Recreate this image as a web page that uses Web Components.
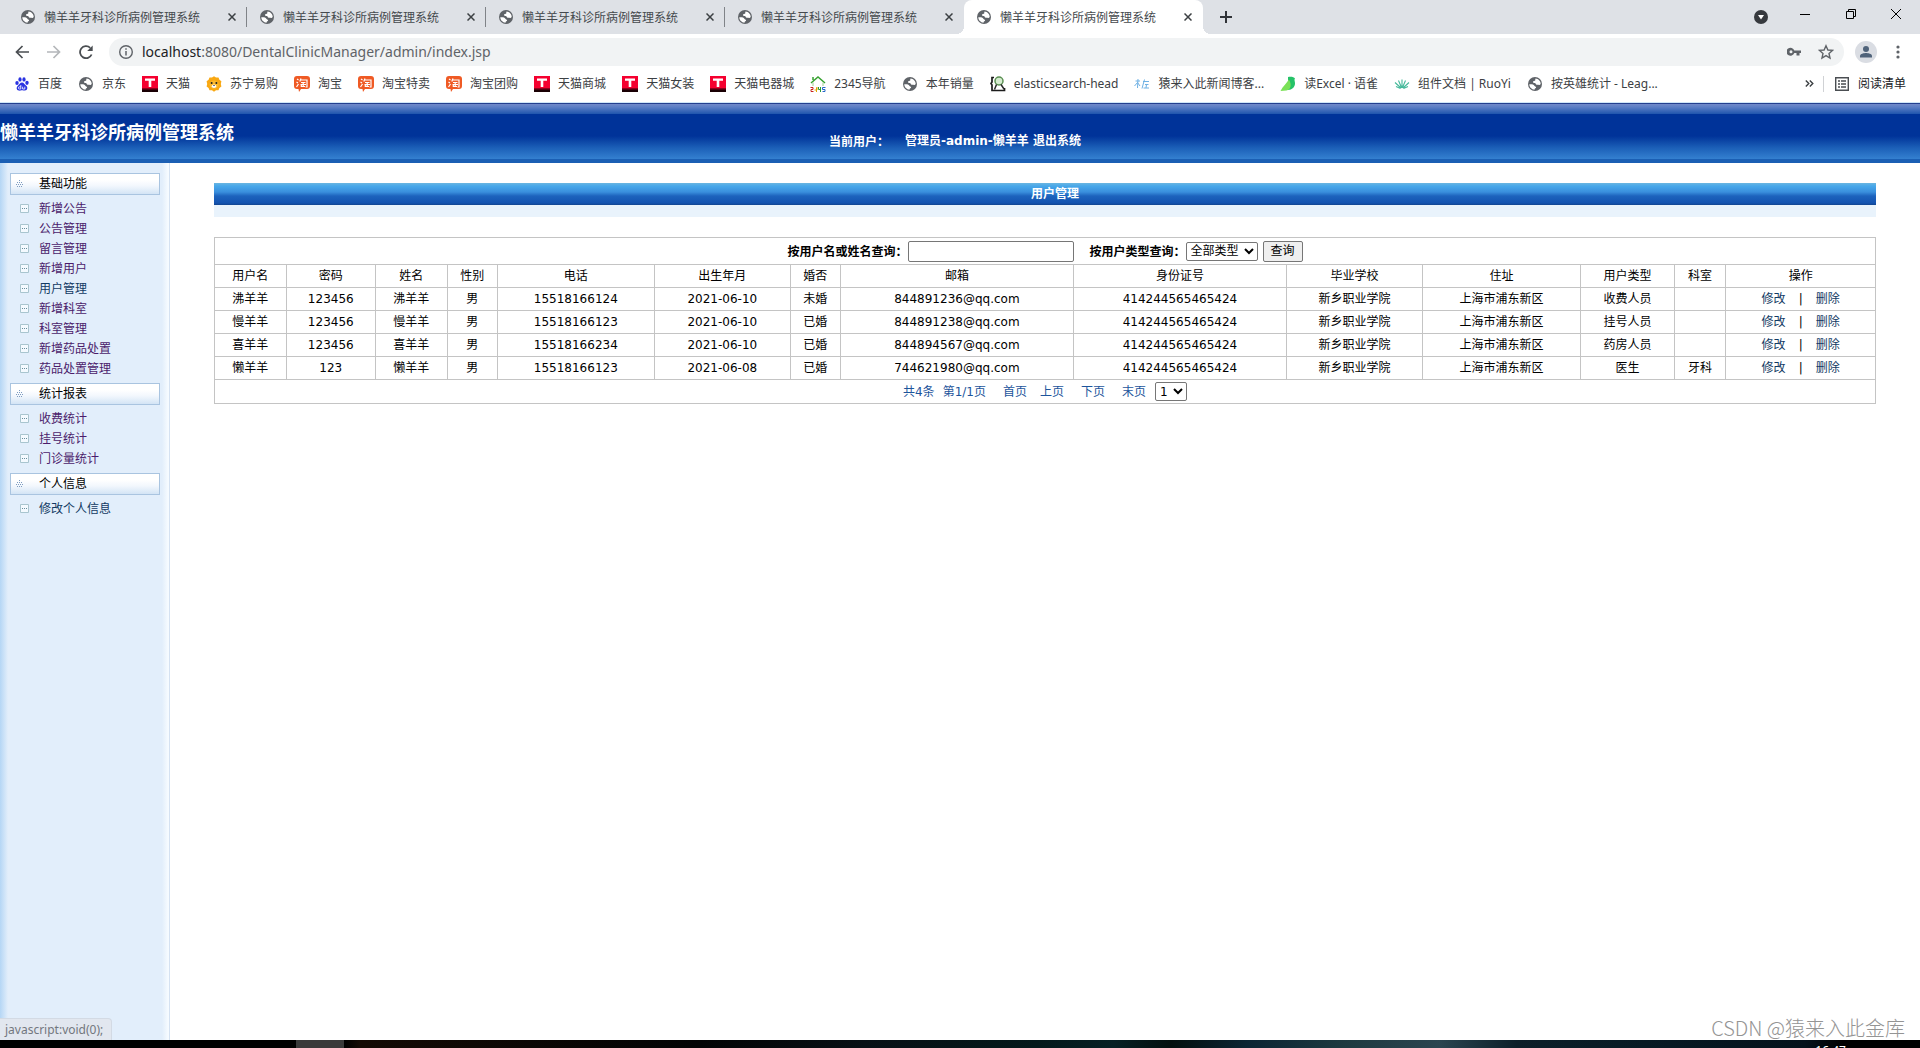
<!DOCTYPE html>
<html lang="zh-CN">
<head>
<meta charset="utf-8">
<title>懒羊羊牙科诊所病例管理系统</title>
<style>
html,body{margin:0;height:100%}
body{font-family:"Noto Sans","Noto Sans CJK SC",sans-serif;font-size:12px;line-height:20px;color:#3c4043;background:#fff}
</style>
</head>
<body>
<clinic-screen></clinic-screen>
<script>
const GLOBE = `<svg viewBox="0 0 16 16" width="16" height="16"><circle cx="8" cy="8" r="7" fill="#5f6368"/><path d="M2.300 8.300C4.200 7.900 6.700 8.200 7.200 9.600C7.400 10.600 9 10.400 9.100 11.300C9 12.400 7.600 12.200 7.500 13.700C4.700 13.500 2.300 11.200 2.300 8.300Z" fill="#fff"/><path d="M8.600 2.400C11.300 2.600 13.600 4.900 13.700 7.600C13.600 8.700 12.800 9.300 11.900 8.900C11.200 8.500 10.400 9 9.500 8.700C8.600 8.200 8.800 7 7.800 7C6.700 7 5.800 6.500 6 5.500C6.300 4.800 7.800 5.200 8.200 4.500C8.500 3.800 8 3 8.600 2.400Z" fill="#fff"/></svg>`;
const TAO = `<svg viewBox="0 0 16 16" width="16" height="16"><path d="M3 0H13a3 3 0 0 1 3 3V10a3 3 0 0 1-3 3H7L5 16 4.500 13H3a3 3 0 0 1-3-3V3a3 3 0 0 1 3-3Z" fill="#ef5a24"/><path d="M3 3l1.500 1M2.500 6l1.500 1M2.500 11l2-3M7 2.500L5.800 5.500M6.500 4H13V11H11.500M7 6.500H11.500M6.500 8.500H12M9.200 6.500V10.500M7.300 9V10.500H11" stroke="#fff" stroke-width="1.200" fill="none"/></svg>`;
const TMALL = `<svg viewBox="0 0 16 16" width="16" height="16"><rect width="16" height="16" fill="#f5002f"/><path d="M0 13H16V16H0Z" fill="#1a0004"/><path d="M0 12H16V13.500H0Z" fill="#90001c"/><path d="M3 2.500H13V4.800H9.300V11H6.700V4.800H3Z" fill="#fff"/></svg>`;
const ICONS = {
  globe: GLOBE, tao: TAO, tmall: TMALL,
  baidu: `<svg viewBox="0 0 16 16" width="16" height="16" fill="#2932e1"><ellipse cx="3" cy="7" rx="1.700" ry="2.100"/><ellipse cx="6" cy="3.400" rx="1.600" ry="2.200"/><ellipse cx="10" cy="3.400" rx="1.600" ry="2.200"/><ellipse cx="13" cy="6.800" rx="1.700" ry="2.100"/><path d="M8 6.500C10 6.500 10.500 8.600 12.200 9.800C14 11.200 13.600 14.500 11 14.600C9.500 14.600 9 14.200 8 14.200S6.300 14.800 4.800 14.600C2.400 14.400 2 11.400 3.800 9.800C5.400 8.500 6 6.500 8 6.500Z"/><path d="M6.800 9V13H5.500A1 1 0 0 1 5.500 10.800H6.800M8.600 10.700V13H10.800V10.700" fill="none" stroke="#fff" stroke-width=".8"/></svg>`,
  suning: `<svg viewBox="0 0 16 16" width="16" height="16"><path d="M8 .3L10 1.600 12.500 1.500 13.400 3.800 15.400 5.300 14.800 8 15.400 10.500 13.400 12 12.500 14.300 10 14.300 8 15.700 6 14.300 3.500 14.300 2.600 12 .6 10.500 1.200 8 .6 5.300 2.600 3.800 3.500 1.500 6 1.600Z" fill="#f9a812"/><ellipse cx="8" cy="8.600" rx="4.500" ry="4" fill="#fdb92c"/><circle cx="5.600" cy="7" r="1" fill="#222"/><circle cx="10.400" cy="7" r="1" fill="#222"/><ellipse cx="8" cy="10.200" rx="2.200" ry="1.700" fill="#fff"/><path d="M7 9H9L8 10.300Z" fill="#222"/></svg>`,
  nav: `<svg viewBox="0 0 16 16" width="16" height="16"><path d="M1 7L8 1 15 7M3 4V1" fill="none" stroke="#35a12f" stroke-width="1.500"/><path d="M3 6.500V10M13 6.500V10" stroke="#9ccf8e"/><path d="M.5 11.500H3V13.500H1V15.500H3.500" fill="none" stroke="#c8201e"/><path d="M7 11V14H4.500M6.500 11.500V16" fill="none" stroke="#e0a800"/><path d="M8.500 11V13.500H11M10.500 11V16" fill="none" stroke="#279b34"/><path d="M15.500 11.500H12.500V13.500H15V15.500H12.500" fill="none" stroke="#2467c9"/></svg>`,
  elastic: `<svg viewBox="0 0 16 16" width="16" height="16"><path d="M4 1.500H2V6L1 7.500 2 9V14.500H14.500V12" fill="none" stroke="#1c1c1c" stroke-width="1.700"/><circle cx="9" cy="5" r="4" fill="#d6ecd0" stroke="#5a8f52" stroke-width="1.500"/><path d="M6.500 8.500L4.500 13.500M11 8.500L14 13" stroke="#2a2a2a" stroke-width="1.500"/></svg>`,
  ape: `<svg viewBox="0 0 16 16" width="16" height="16" fill="none" stroke="#6fb1e4"><path d="M1.500 5H6M4 3L3.500 12M3.500 6.500L.5 10M3.500 6.500L6 10M8 12.500L10.500 3.500M9 5.500H15M11 8.500H14.500M9.500 12H15M12.500 8.500L12 12"/></svg>`,
  yuque: `<svg viewBox="0 0 16 16" width="16" height="16"><path d="M8 1C11 .3 14 1 15 2.500 14 3 14.800 5 15 7 15.200 11 12 14 8 14Z" fill="#25c268"/><path d="M.5 15C3 10 7 7 8.800 3.500 12 8 11 14 6.500 14.500Z" fill="#7be158"/></svg>`,
  ruoyi: `<svg viewBox="0 0 16 16" width="16" height="16" fill="none" stroke="#45b99a" stroke-width="1.100"><path d="M8 12V3.500M7.700 12L4.500 4.500M8.300 12L11.500 4.500M7 12L1 6.500M9 12L15 6.500M6.500 12.500L2 10.500M9.500 12.500L14 10.500"/></svg>`
};

function define(name, render) {
  customElements.define(name, class extends HTMLElement {
    connectedCallback() {
      if (this.shadowRoot) return;
      const root = this.attachShadow({ mode: 'open' });
      const t = document.createElement('template');
      t.innerHTML = render(this);
      root.append(t.content.cloneNode(true));
    }
  });
}

define('browser-tab', el => `
<style>
:host{display:flex;align-items:center;box-sizing:border-box;flex:0 1 239px;height:34px;padding:0 0 0 12px;color:#45494d;position:relative}
svg{display:block;flex:none}
span{flex:1;margin-left:8px;padding-top:1px;white-space:nowrap;overflow:hidden}
button{border:0;background:none;padding:4px;height:16px;width:16px;flex:none}
i{width:1px;height:20px;background:#808388;margin-left:6px}
:host([active]){background:#fff;border-radius:8px 8px 0 0}
:host([active]) i,:host([last]) i{background:none}
:host([active])::before,:host([active])::after{content:"";position:absolute;bottom:0;width:8px;height:8px}
:host([active])::before{left:-8px;background:radial-gradient(circle at 0 0,transparent 8px,#fff 8px)}
:host([active])::after{right:-8px;background:radial-gradient(circle at 100% 0,transparent 8px,#fff 8px)}
</style>
${GLOBE}<span><slot></slot></span>
<button aria-label="关闭标签页"><svg viewBox="0 0 8 8" width="8" height="8"><path d="M.5 .5L7.500 7.500M7.500 .5L.5 7.500" stroke="#3c4043" stroke-width="1.500"/></svg></button><i></i>`);

define('browser-tabs', () => `
<style>
:host{display:flex;height:34px;background:#dee1e6;align-items:center}
.tabs{display:flex;flex:0 1 1195px;padding-left:8px}
button{border:0;background:none;padding:0;display:flex;align-items:center;justify-content:center}
.plus{width:46px}
.win{margin-left:auto;display:flex;align-items:center;height:34px}
.win button{width:46px;height:28px;align-self:flex-start}
.win .drop{width:32px;height:34px;margin-right:5px}
.win button:last-child{padding-right:2px}
</style>
<div class="tabs"><slot></slot></div>
<button class="plus" aria-label="新标签页"><svg width="12" height="12"><path d="M6 0V12M0 6H12" stroke="#303338" stroke-width="2"/></svg></button>
<div class="win">
<button class="drop" aria-label="搜索标签页"><svg width="14" height="14"><circle cx="7" cy="7" r="7" fill="#36393e"/><path d="M4 5H10L7 9.500Z" fill="#fff"/></svg></button>
<button aria-label="最小化"><svg width="10" height="10"><path d="M0 5.500H10" stroke="#000"/></svg></button>
<button aria-label="还原"><svg width="10" height="10"><path d="M.5 2.500H7.500V9.500H.5ZM2.500 2.500V.5H9.500V7.500H7.500" fill="none" stroke="#000"/></svg></button>
<button aria-label="关闭"><svg width="10" height="10"><path d="M0 0L10 10M10 0L0 10" stroke="#000"/></svg></button>
</div>`);

define('browser-toolbar', () => `
<style>
:host{display:flex;height:36px;align-items:center;background:#fff;padding:0 6px}
button{border:0;background:none;padding:0;width:32px;height:28px;display:flex;align-items:center;justify-content:center;flex:none}
.omni{display:flex;align-items:center;flex:1;height:28px;border-radius:14px;background:#f1f3f4;margin:0 6px 0 7px;padding-left:9px;padding-right:2px}
.url{flex:1;margin-left:8px;font-size:14px;color:#5f6368;white-space:nowrap}
.url b{font-weight:400;color:#202124}
svg{display:block}
</style>
<button aria-label="后退"><svg width="14" height="14"><path d="M14 7H1.500M7.500 1L1.500 7L7.500 13" fill="none" stroke="#4a4e52" stroke-width="1.700"/></svg></button>
<button aria-label="前进"><svg width="14" height="14"><path d="M0 7H12.500M6.500 1L12.500 7L6.500 13" fill="none" stroke="#b4b7ba" stroke-width="1.700"/></svg></button>
<button aria-label="重新加载"><svg width="14" height="14"><path d="M12.600 9.500A6 6 0 1 1 11.200 2.800" fill="none" stroke="#4a4e52" stroke-width="1.800"/><path d="M13.700 .5V6H8.200Z" fill="#4a4e52"/></svg></button>
<div class="omni">
<svg width="16" height="16"><circle cx="8" cy="8" r="6.300" fill="none" stroke="#5f6368" stroke-width="1.400"/><path d="M8 7V11.500M8 4.200V5.800" stroke="#5f6368" stroke-width="1.500"/></svg>
<span class="url"><b>localhost</b>:8080/DentalClinicManager/admin/index.jsp</span>
<button aria-label="密码"><svg width="14" height="10"><path d="M7.300 3.500A4 4 0 1 0 7.300 6H9.500V8.500H12.500V6H14V3.500ZM4 6.300A1.500 1.500 0 1 1 4 3.300A1.500 1.500 0 0 1 4 6.300Z" fill="#5f6368"/></svg></button>
<button aria-label="收藏"><svg width="16" height="16"><path d="M8 1.800L9.900 6 14.500 6.400 11 9.500 12 14 8 11.600 4 14 5 9.500 1.500 6.400 6.100 6Z" fill="none" stroke="#5f6368" stroke-width="1.400"/></svg></button>
</div>
<button aria-label="用户"><svg width="22" height="22"><circle cx="11" cy="11" r="11" fill="#dadde3"/><circle cx="11" cy="8" r="3" fill="#50637a"/><path d="M5 16.500V15C5 12.800 9 12 11 12S17 12.800 17 15V16.500Z" fill="#50637a"/></svg></button>
<button aria-label="菜单"><svg width="4" height="14" fill="#5f6368"><circle cx="2" cy="2" r="1.600"/><circle cx="2" cy="7" r="1.600"/><circle cx="2" cy="12" r="1.600"/></svg></button>`);

define('bookmark-item', el => `
<style>:host{display:block;flex:none}a{display:flex;align-items:center;gap:8px;color:#3c4043;text-decoration:none;white-space:nowrap}svg{display:block}span{padding-top:1px}</style>
<a href="#">${ICONS[el.getAttribute('icon')]}<span><slot></slot></span></a>`);

define('bookmark-bar', () => `
<style>
:host{display:flex;align-items:center;height:27px;padding:0 14px 5px;background:#fff;border-bottom:1px solid #cfe6f7}
nav{display:flex;gap:16px;flex:1;overflow:hidden}
button{border:0;background:none;padding:0;display:flex;align-items:center;gap:9px;font:inherit;line-height:20px;color:#202124;white-space:nowrap}
.more{margin-right:9px}
hr{width:1px;height:16px;background:#d0d2d5;border:0;margin:0 11px 0 0}
</style>
<nav>
${[['baidu','百度'],['globe','京东'],['tmall','天猫'],['suning','苏宁易购'],['tao','淘宝'],['tao','淘宝特卖'],['tao','淘宝团购'],['tmall','天猫商城'],['tmall','天猫女装'],['tmall','天猫电器城'],['nav','2345导航'],['globe','本年销量'],['elastic','elasticsearch-head'],['ape','猿来入此新闻博客...'],['yuque','读Excel · 语雀'],['ruoyi','组件文档 | RuoYi'],['globe','按英雄统计 - Leag...']].map(([i,t])=>`<bookmark-item icon="${i}">${t}</bookmark-item>`).join('')}
</nav>
<button class="more" aria-label="更多书签"><svg width="9" height="7"><path d="M.8 .5L3.800 3.500L.8 6.500M4.800 .5L7.800 3.500L4.800 6.500" fill="none" stroke="#3c4043" stroke-width="1.400"/></svg></button><hr>
<button><svg width="14" height="14"><path d="M.7 .7H13.300V13.300H.7Z" fill="none" stroke="#4a4e52" stroke-width="1.400"/><path d="M3 4H5M3 7H5M3 10H5M6 4H11M6 7H11M6 10H11" stroke="#4a4e52" stroke-width="1.400"/></svg>阅读清单</button>`);

define('app-header', () => `
<style>
:host{display:flex;height:60px;box-sizing:border-box;color:#fff;font-weight:700;
background:linear-gradient(#24408f 0 1px,#7189c9 1px,#5c7fc6 4px,#1f55ad 11px,#003399 11px,#003399 33px,#1c60b8 45px,#3480d0 56px,#1b5fb4 56px)}
h1{margin:0;font-size:18px;line-height:24px;padding-top:17px;flex:1 1 0;white-space:nowrap}
.user{display:flex;gap:16px;padding-top:28px;font-size:12px;line-height:20px;font-family:"DejaVu Sans","Noto Sans CJK SC",sans-serif;white-space:nowrap}
.colon{font-family:"Noto Sans CJK TC",sans-serif}
.fill{flex:1 1 0;min-width:0;padding-right:10px}
a{color:#fff;text-decoration:none}
</style>
<h1>懒羊羊牙科诊所病例管理系统</h1>
<div class="user"><span>当前用户<span class="colon">：</span></span><span>管理员-admin-懒羊羊 <a href="#">退出系统</a></span></div>
<div class="fill"></div>`);

define('menu-group', el => `
<style>
:host{display:block;padding-bottom:5px}
h2{margin:0 0 4px;font-size:12px;font-weight:400;line-height:20px;color:#000;display:flex;align-items:center;border:1px solid #a9c4e0;background:linear-gradient(#fff 30%,#f2f7fd 60%,#d3e4f5);height:20px;padding-left:5px}
h2 svg{margin-right:15px}
div{margin-bottom:-1px}
svg{display:block}
</style>
<h2><svg width="8" height="8" fill="#7d9cc0"><path d="M3 0h1v1H3zM1 2h1v1H1zM3 2h1v1H3zM5 2h1v1H5zM0 4h1v1H0zM2 4h1v1H2zM4 4h1v1H4zM6 4h1v1H6zM1 6h1v1H1zM3 6h1v1H3zM5 6h1v1H5z"/></svg>${el.getAttribute('label')}</h2>
<div><slot></slot></div>`);

define('menu-link', el => `
<style>
:host{display:block}
a{display:flex;align-items:center;height:20px;padding-left:10px;gap:9px;color:#4b1c6b;text-decoration:none;white-space:nowrap}
:host([fresh]) a{color:#123a63}
svg{display:block}
</style>
<a href="javascript:void(0);"><svg width="10" height="10"><path d="M.5 .5H8.500V8.500H.5Z" fill="#f4faff" stroke="#a9c5cf"/><path d="M2 4h1v1H2zM4 4h1v1H4zM6 4h1v1H6z" fill="#6a8f9e"/></svg><slot></slot></a>`);

define('side-menu', () => `
<style>
:host{display:block;box-sizing:border-box;width:170px;flex:none;padding:10px 9px 10px 10px;border-right:1px solid #d5e2f2;color:#000;
background:linear-gradient(90deg,#b5d6f5,#e2eefb 8px,#e2eefb 162px,#f6fbff 168px)}
</style><slot></slot>`);

const COLS = [['用户名',72],['密码',89],['姓名',72],['性别',50],['电话',157],['出生年月',136],['婚否',50],['邮箱',233],['身份证号',213],['毕业学校',136],['住址',158],['用户类型',94],['科室',51],['操作',150]];
const ROWS = [
['沸羊羊','123456','沸羊羊','男','15518166124','2021-06-10','未婚','844891236@qq.com','414244565465424','新乡职业学院','上海市浦东新区','收费人员',''],
['慢羊羊','123456','慢羊羊','男','15518166123','2021-06-10','已婚','844891238@qq.com','414244565465424','新乡职业学院','上海市浦东新区','挂号人员',''],
['喜羊羊','123456','喜羊羊','男','15518166234','2021-06-10','已婚','844894567@qq.com','414244565465424','新乡职业学院','上海市浦东新区','药房人员',''],
['懒羊羊','123','懒羊羊','男','15518166123','2021-06-08','已婚','744621980@qq.com','414244565465424','新乡职业学院','上海市浦东新区','医生','牙科']];

define('user-table', () => `
<style>
:host{display:block}
table{width:100%;border-collapse:collapse;table-layout:fixed;color:#000}
th,td{border:1px solid #c4c4c4;height:22px;padding:0;text-align:center;font-weight:400;line-height:18px;white-space:nowrap}
.search td{height:26px;font-weight:700}
tfoot td{height:23px}
.row{display:flex;align-items:center;justify-content:center}
.colon{font-family:"Noto Sans CJK TC",sans-serif}
input,select,button{font-family:inherit;font-size:12px;box-sizing:border-box;margin:0;color:#000;border:1px solid #767676;border-radius:2px}
input{width:166px;height:21px;margin-right:16px;background:#fff}
select{height:19px;padding:0;background:#fff}
button{height:21px;width:40px;padding:0;margin-left:5px;background:#efefef;line-height:18px}
#type{width:72px}
#page{width:32px}
a{color:#123a63;text-decoration:none}
.act{gap:13px}
tfoot .row{color:#1d559c}
tfoot a{color:#1d559c;margin-right:13px}
tfoot a:last-of-type{margin-right:9px}
tfoot span{margin-right:8px}
tfoot span+span{margin-right:17px}
tfoot a.wide{margin-right:17px}
</style>
<table>
<colgroup>${COLS.map(c=>`<col style="width:${c[1]}px">`).join('')}</colgroup>
<tbody>
<tr class="search"><td colspan="14"><div class="row"><label for="name">按用户名或姓名查询<span class="colon">：</span></label><input id="name" type="text"><label for="type">按用户类型查询<span class="colon">：</span></label><select id="type"><option>全部类型</option></select><button>查询</button></div></td></tr>
<tr>${COLS.map(c=>`<th scope="col">${c[0]}</th>`).join('')}</tr>
${ROWS.map(r=>`<tr>${r.map(c=>`<td>${c}</td>`).join('')}<td><div class="row act"><a href="#">修改</a><span>|</span><a href="#">删除</a></div></td></tr>`).join('')}
</tbody>
<tfoot><tr><td colspan="14"><div class="row"><span>共4条</span><span>第1/1页</span><a href="#">首页</a><a class="wide" href="#">上页</a><a class="wide" href="#">下页</a><a href="#">末页</a><select id="page" aria-label="页码"><option>1</option></select></div></td></tr></tfoot>
</table>`);

define('user-page', () => `
<style>
:host{display:block;flex:1;min-width:0;padding-top:20px;background:#fff}
section{width:95%;margin:0 auto}
h2{margin:0;height:22px;font-size:12px;line-height:22px;color:#fff;text-align:center;padding-left:20px;background:linear-gradient(#6bb5e0,#48a8ea 3px,#3a8fdd 9px,#1d63bd 13px,#1453b0 20px,#12458f)}
.strip{height:12px;background:#e9f3fc;margin-bottom:20px}
</style>
<section><h2>用户管理</h2><div class="strip"></div><user-table></user-table></section>`);

define('task-bar', () => `
<style>
:host{display:flex;height:8px;overflow:hidden;color:#fff;font-size:12px;line-height:16px;
background:linear-gradient(90deg,#000 0 344px,#140a04 360px,#020405 700px,#071015 45%,#03191b 54%,#062024 58%,#03100f 61%,#0b2533 65%,#1d3a40 70%,#2a4550 75%,#0c1f29 79%,#061923 87%,#04121b 94%,#000 96%)}
i{width:48px;margin-left:296px;background:#3a3a3a}
time{margin:3px 74px 0 auto}
</style><i></i><time>16:47</time>`);

define('clinic-screen', () => `
<style>
:host{display:flex;flex-direction:column;min-height:100vh}
main{display:flex;flex:1;position:relative;font-family:"DejaVu Sans","Noto Sans CJK SC",sans-serif}
.status{position:absolute;left:0;bottom:0;box-sizing:border-box;height:22px;padding:0 8px 0 5px;border:1px solid #d3dae4;border-width:1px 1px 0 0;border-radius:0 4px 0 0;background:#e2e7ef;color:#73777e;font-family:"Noto Sans",sans-serif;line-height:22px}
.mark{position:absolute;right:15px;bottom:0;font-family:"Noto Sans CJK SC",sans-serif;font-weight:300;font-size:20px;line-height:24px;color:#949494}
</style>
<browser-tabs>${[0,1,2,3].map(i=>`<browser-tab${i===3?' last':''}>懒羊羊牙科诊所病例管理系统</browser-tab>`).join('')}<browser-tab active>懒羊羊牙科诊所病例管理系统</browser-tab></browser-tabs>
<browser-toolbar></browser-toolbar>
<bookmark-bar></bookmark-bar>
<app-header></app-header>
<main>
<side-menu>
<menu-group label="基础功能">${['新增公告','公告管理','留言管理','新增用户','用户管理','新增科室','科室管理','新增药品处置','药品处置管理'].map(t=>`<menu-link${t==='用户管理'?' fresh':''}>${t}</menu-link>`).join('')}</menu-group>
<menu-group label="统计报表"><menu-link>收费统计</menu-link><menu-link>挂号统计</menu-link><menu-link>门诊量统计</menu-link></menu-group>
<menu-group label="个人信息"><menu-link fresh>修改个人信息</menu-link></menu-group>
</side-menu>
<user-page></user-page>
<div class="status">javascript:void(0);</div>
<div class="mark">CSDN @猿来入此金库</div>
</main>
<task-bar></task-bar>`);
</script>
</body>
</html>
